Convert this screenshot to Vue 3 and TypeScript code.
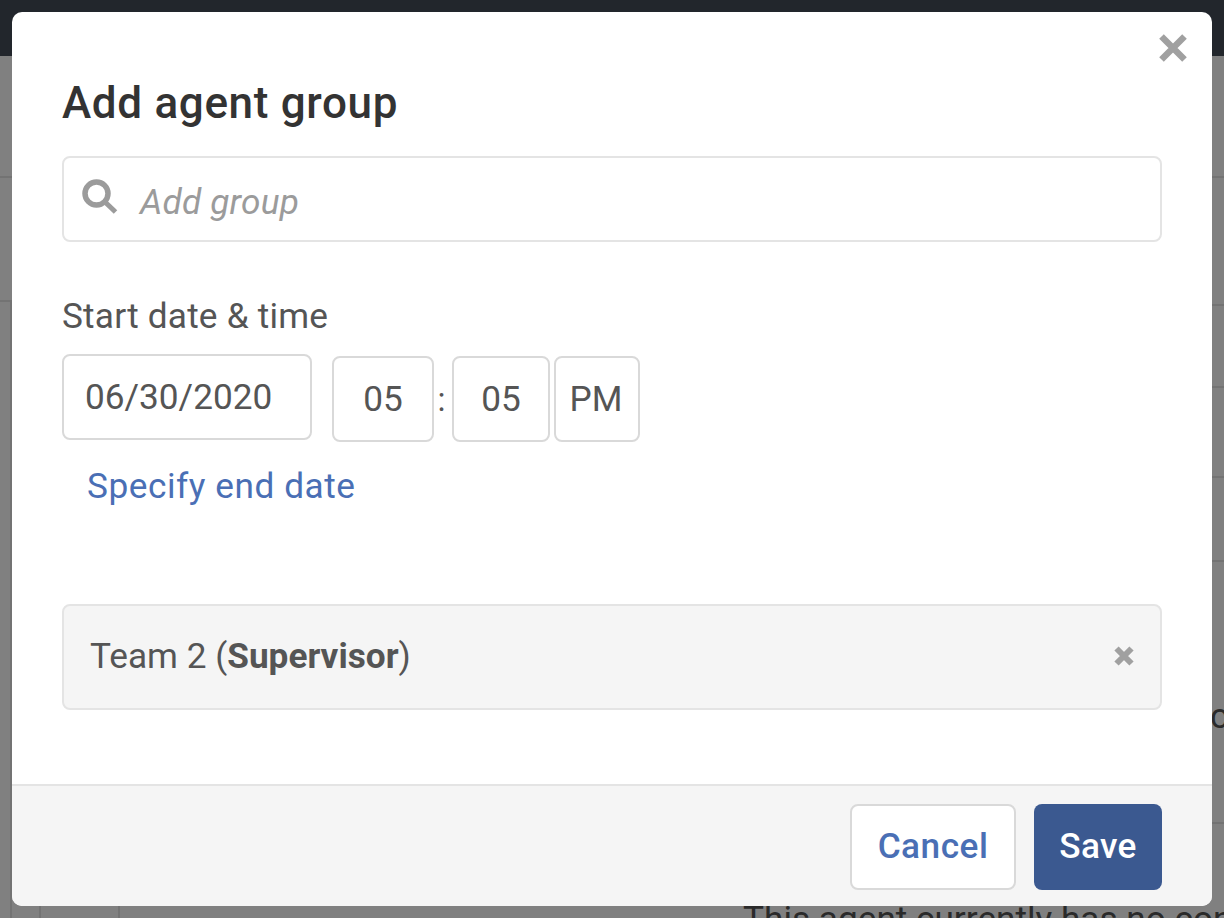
<script setup lang="ts">
const leftRows = [122, 124];
const rightRows = [
  { h: 122 },
  { h: 128 },
  { h: 82 },
  { h: 90 },
  { h: 84 },
  { h: 262, text: "c" },
];
</script>

<template>
  <div class="page">
    <header class="topbar"></header>
    <div class="backdrop">
      <div class="col">
        <div v-for="(h, i) in leftRows" :key="i" class="row" :style="{ height: h + 'px' }"></div>
        <div class="left-rest">
          <div class="rail rail-a"></div>
          <div class="rail rail-b"></div>
          <div class="rail rail-c"></div>
        </div>
      </div>
      <div class="col">
        <div v-for="(r, i) in rightRows" :key="i" class="row" :style="{ height: r.h + 'px' }">
          <span v-if="r.text" class="stray">{{ r.text }}</span>
        </div>
        <p class="empty-text">This agent currently has no contact</p>
      </div>
    </div>

    <div class="modal">
      <button class="close" aria-label="Close">
        <svg width="28" height="28" viewBox="0 0 28 28">
          <path d="M2.5 2.5 25.5 25.5M25.5 2.5 2.5 25.5" stroke="#a0a0a0" stroke-width="6.5" fill="none" />
        </svg>
      </button>
      <div class="body">
        <h2 class="title">Add agent group</h2>
        <div class="search">
          <svg class="search-icon" width="36" height="36" viewBox="0 0 36 36">
            <circle cx="14.5" cy="14.5" r="11.5" stroke="#9b9b9b" stroke-width="5.5" fill="none" />
            <path d="M22.5 22.5 33.5 33" stroke="#9b9b9b" stroke-width="5" fill="none" />
          </svg>
          <span class="placeholder">Add group</span>
        </div>
        <label class="label">Start date &amp; time</label>
        <div class="datetime">
          <div class="field date">06/30/2020</div>
          <div class="time">
            <div class="field hour">05</div>
            <span class="colon">:</span>
            <div class="field minute">05</div>
            <div class="field ampm">PM</div>
          </div>
        </div>
        <a class="end-link">Specify end date</a>
        <div class="group">
          <span>Team 2 (<strong>Supervisor</strong>)</span>
          <svg width="20" height="20" viewBox="0 0 20 20">
            <path d="M2.5 2.5 17.5 17.5M17.5 2.5 2.5 17.5" stroke="#a0a0a0" stroke-width="6" fill="none" />
          </svg>
        </div>
      </div>
      <footer class="footer">
        <button class="btn cancel">Cancel</button>
        <button class="btn save">Save</button>
      </footer>
    </div>
  </div>
</template>

<style>
html,
body {
  margin: 0;
  background: #808080;
}
</style>

<style scoped>
.page {
  position: relative;
  width: 1224px;
  height: 918px;
  overflow: hidden;
  background: #808080;
  font-family: Roboto, "Liberation Sans", sans-serif;
}

.topbar {
  height: 56px;
  background: #22262c;
}

.backdrop {
  display: grid;
  grid-template-columns: 1fr 1fr;
  height: 862px;
}

.col {
  display: flex;
  flex-direction: column;
  min-height: 0;
  min-width: 0;
}

.row {
  box-sizing: border-box;
  flex-shrink: 0;
  border-bottom: 2px solid #737373;
}

.left-rest {
  flex: 1;
  display: flex;
}

.rail {
  width: 2px;
  background: #737373;
}

.rail-a {
  margin-left: 10px;
}

.rail-b {
  margin-left: 27px;
}

.rail-c {
  margin-left: 77px;
}

.empty-text {
  flex-shrink: 0;
  margin: 76px 0 0 131px;
  font-size: 35.2px;
  line-height: 38px;
  white-space: nowrap;
  color: #2a2a2a;
}

.stray {
  display: block;
  margin: 135px 0 0 598px;
  font-size: 35.2px;
  line-height: 38px;
  color: #2a2a2a;
}

.modal {
  position: absolute;
  top: 12px;
  left: 12px;
  width: 1200px;
  height: 894px;
  display: flex;
  flex-direction: column;
  background: #fff;
  border-radius: 10px;
  overflow: hidden;
}

.close {
  position: absolute;
  top: 22px;
  right: 25px;
  width: 28px;
  height: 28px;
  padding: 0;
  border: 0;
  background: none;
  display: flex;
}

.body {
  flex: 1;
  display: flex;
  flex-direction: column;
  align-items: flex-start;
  padding: 0 50px;
}

.title {
  margin: 63px 0 0;
  font-size: 44px;
  line-height: 56px;
  font-weight: 500;
  letter-spacing: 0.67px;
  color: #333;
}

.search {
  box-sizing: border-box;
  align-self: stretch;
  height: 86px;
  margin-top: 25px;
  display: flex;
  align-items: center;
  gap: 22px;
  padding: 0 18px;
  border: 2px solid #e4e4e4;
  border-radius: 8px;
}

.search-icon {
  margin-top: -4px;
}

.placeholder {
  padding-top: 6px;
  font-size: 35.2px;
  font-style: italic;
  letter-spacing: 0.2px;
  color: #9b9b9b;
}

.label {
  margin-top: 53px;
  font-size: 35.2px;
  line-height: 42px;
  letter-spacing: 0.2px;
  color: #555;
}

.datetime {
  display: flex;
  gap: 20px;
  margin-top: 17px;
}

.time {
  display: flex;
  align-items: center;
  margin-top: 2px;
}

.field {
  box-sizing: border-box;
  height: 86px;
  display: flex;
  align-items: center;
  justify-content: center;
  border: 2px solid #d9d9d9;
  border-radius: 8px;
  font-size: 35.2px;
  color: #555;
}

.date {
  width: 250px;
  justify-content: flex-start;
  padding-left: 21px;
}

.hour {
  width: 102px;
}

.colon {
  width: 18px;
  padding-right: 3px;
  box-sizing: border-box;
  text-align: center;
  font-size: 33px;
  color: #555;
}

.minute {
  width: 98px;
  margin-right: 4px;
}

.ampm {
  width: 86px;
  padding-right: 2px;
}

.end-link {
  margin: 22px 0 0 25px;
  font-size: 35.2px;
  line-height: 44px;
  letter-spacing: 0.55px;
  color: #4a6fb5;
}

.group {
  box-sizing: border-box;
  align-self: stretch;
  height: 106px;
  margin-top: 96px;
  display: flex;
  align-items: center;
  justify-content: space-between;
  padding: 0 26px;
  border: 2px solid #e4e4e4;
  border-radius: 8px;
  background: #f5f5f5;
  font-size: 35.2px;
  color: #555;
}

.group span {
  margin-top: -2px;
}

.group svg {
  margin-top: -3px;
}

.group strong {
  font-weight: 700;
}

.footer {
  box-sizing: border-box;
  height: 122px;
  display: flex;
  justify-content: flex-end;
  gap: 18px;
  padding: 18px 50px 0;
  border-top: 2px solid #e4e4e4;
  background: #f5f5f5;
}

.btn {
  box-sizing: border-box;
  height: 86px;
  border-radius: 8px;
  font-family: inherit;
  font-size: 35.2px;
  font-weight: 500;
  padding: 0 0 2px;
}

.cancel {
  width: 166px;
  border: 2px solid #d9d9d9;
  background: #fff;
  color: #4a6fb5;
  letter-spacing: 0.5px;
}

.save {
  width: 128px;
  border: 0;
  background: #3b5990;
  color: #fff;
  letter-spacing: 0.3px;
}
</style>
